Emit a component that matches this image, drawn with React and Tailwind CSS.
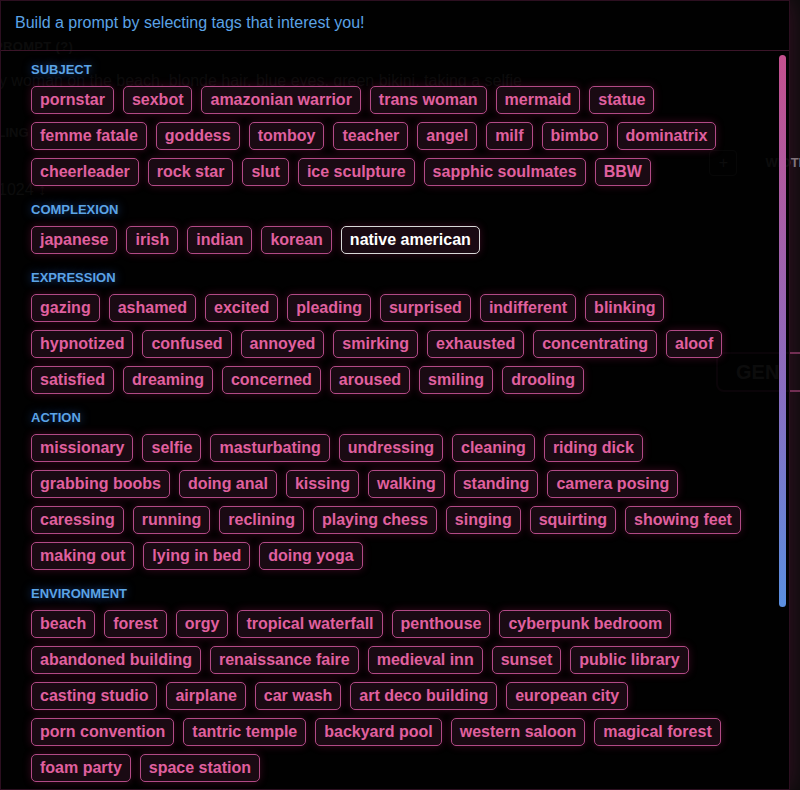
import { Fragment } from 'react';

const SECTIONS = [
  {
    title: 'SUBJECT',
    tags: ['pornstar', 'sexbot', 'amazonian warrior', 'trans woman', 'mermaid', 'statue', 'femme fatale', 'goddess', 'tomboy', 'teacher', 'angel', 'milf', 'bimbo', 'dominatrix', 'cheerleader', 'rock star', 'slut', 'ice sculpture', 'sapphic soulmates', 'BBW'],
  },
  {
    title: 'COMPLEXION',
    tags: ['japanese', 'irish', 'indian', 'korean', 'native american'],
  },
  {
    title: 'EXPRESSION',
    tags: ['gazing', 'ashamed', 'excited', 'pleading', 'surprised', 'indifferent', 'blinking', 'hypnotized', 'confused', 'annoyed', 'smirking', 'exhausted', 'concentrating', 'aloof', 'satisfied', 'dreaming', 'concerned', 'aroused', 'smiling', 'drooling'],
  },
  {
    title: 'ACTION',
    tags: ['missionary', 'selfie', 'masturbating', 'undressing', 'cleaning', 'riding dick', 'grabbing boobs', 'doing anal', 'kissing', 'walking', 'standing', 'camera posing', 'caressing', 'running', 'reclining', 'playing chess', 'singing', 'squirting', 'showing feet', 'making out', 'lying in bed', 'doing yoga'],
  },
  {
    title: 'ENVIRONMENT',
    tags: ['beach', 'forest', 'orgy', 'tropical waterfall', 'penthouse', 'cyberpunk bedroom', 'abandoned building', 'renaissance faire', 'medieval inn', 'sunset', 'public library', 'casting studio', 'airplane', 'car wash', 'art deco building', 'european city', 'porn convention', 'tantric temple', 'backyard pool', 'western saloon', 'magical forest', 'foam party', 'space station'],
  },
];

const selected = ['native american'];

const Tag = ({ label, active }) => (
  <button
    type="button"
    className={
      active
        ? 'h-7 px-2 flex items-center rounded-[5px] border border-[#d8d8d8] bg-[#1a0a13] text-white text-base font-bold leading-5 shadow-[0_0_8px_rgba(219,39,119,0.25)]'
        : 'h-7 px-2 flex items-center rounded-[5px] border border-[#b24a86] bg-[#1a0a13] text-[#e0609f] text-base font-bold leading-5 shadow-[0_0_8px_rgba(219,39,119,0.25)]'
    }
  >
    {label}
  </button>
);

// faint page that sits under the modal
const GhostPage = () => (
  <div className="h-screen overflow-hidden bg-[#0b0b0b] text-[#7a7a7a]">
    <div className="pt-[37px] -ml-[6px] text-[13px] font-bold tracking-wide">PROMPT (?)</div>
    <div className="mt-[12px] -ml-[26px] text-base whitespace-nowrap">sexy woman on the beach, blonde hair, blue eyes, green bikini, taking a selfie</div>
    <div className="mt-[30px] -ml-[40px] text-[13px] font-bold">SAMPLING</div>
    <div className="mt-[8px] flex items-center justify-end gap-7 -mr-[8px]">
      <div className="w-[28px] h-[26px] border border-[#4a4a4a] rounded flex items-center justify-center text-base">+</div>
      <span className="text-[13px] font-bold">WIDTH</span>
    </div>
    <div className="mt-[2px] -ml-[2px] text-base">1024 ↕</div>
    <div className="mt-[150px] flex justify-end -mr-[20px]">
      <div className="w-[104px] h-[40px] border-2 border-[#6a3050] rounded-lg flex items-center pl-[18px] text-xl font-bold">GEN</div>
    </div>
  </div>
);

export default function App() {
  return (
    <div className="relative h-screen overflow-hidden font-['Liberation_Sans',Arial,sans-serif]">
      <GhostPage />
      <div className="absolute inset-0 flex">
        <div className="relative w-[790px] h-full flex flex-col bg-black/[0.9] border border-[#2c0f20] shadow-[0_0_24px_rgba(190,40,120,0.25)]">
          <div className="h-[50px] shrink-0 px-[14px] pt-[10px] border-b border-[#3b1529]">
            <h2 className="text-base leading-6 text-[#5ba3e6]">Build a prompt by selecting tags that interest you!</h2>
          </div>
          <div className="flex-1 overflow-y-auto pl-[30px] pr-[28px] pt-[11px] pb-[240px] [scrollbar-width:none]">
            <div className="flex flex-col gap-4">
              {SECTIONS.map((s) => (
                <Fragment key={s.title}>
                  <section>
                    <h3 className="mb-2 text-[13px] leading-4 font-bold text-[#5ba3e6] [text-shadow:0_0_10px_rgba(59,130,246,0.55)]">{s.title}</h3>
                    <div className="flex flex-wrap gap-y-2 gap-x-[9px]">
                      {s.tags.map((t) => (
                        <Tag key={t} label={t} active={selected.includes(t)} />
                      ))}
                    </div>
                  </section>
                </Fragment>
              ))}
            </div>
          </div>
          {/* scroll thumb */}
          <div className="absolute right-[3px] top-[54px] w-[7px] h-[552px] rounded-full bg-[linear-gradient(to_bottom,#c4508e,#8a6cc0_60%,#5b8fe0)]" />
        </div>
      </div>
    </div>
  );
}
